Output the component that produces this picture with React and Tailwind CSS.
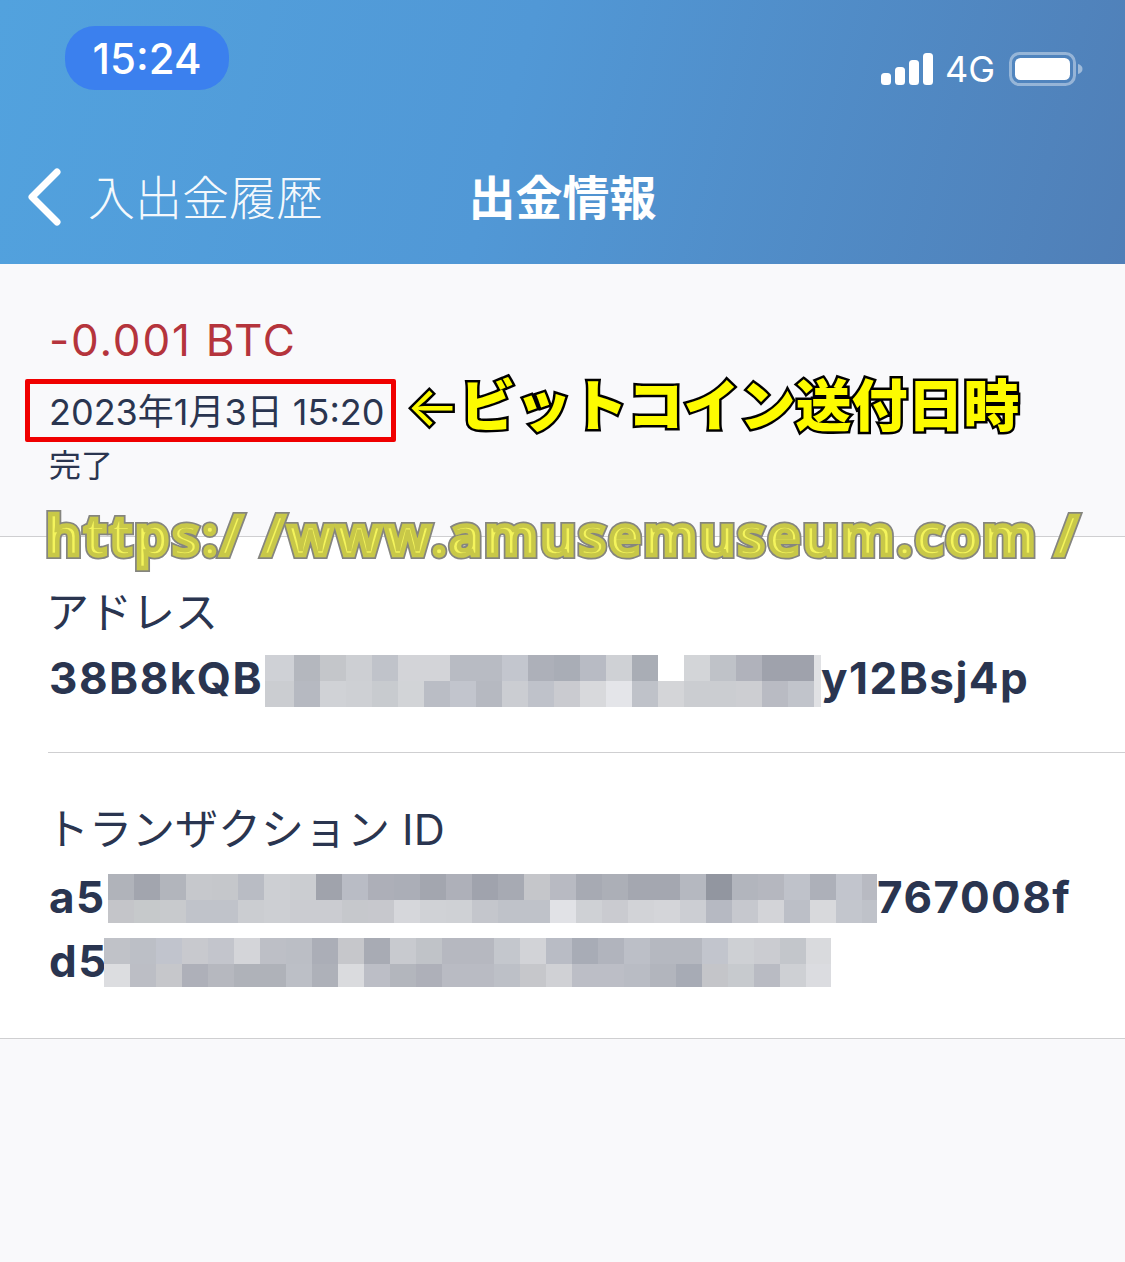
const CJK = '"Inter", "Noto Sans CJK JP", sans-serif';

// mosaic colours, read off the picture cell by cell
const addressCells = {
  top: ['#cfd1d6', '#b4b7be', '#c4c6ca', '#cdcfd3', '#c0c3ca', '#d3d4d8', '#d3d4d8', '#b8bbc3', '#b8bbc3', '#c3c6ce', '#adb0b9', '#a9adb6', '#b8bbc4', '#cfd1d5', '#a9adb5', '#ffffff', '#d3d5d8', '#bfc2c8', '#b0b2bb', '#9fa2ac', '#9fa2ac', '#e0e1e4'],
  bottom: ['#cbcdd1', '#b6b9c1', '#d0d2d6', '#ced0d4', '#c8cbcf', '#d2d4d7', '#babdc5', '#c2c5cd', '#b6b9c1', '#cbcdd2', '#bfc2ca', '#cacbd0', '#d8d9dc', '#e4e5e9', '#bfc2c9', '#d4d5d8', '#cbcdd1', '#cbcdd1', '#cdced2', '#b9bbc3', '#c1c4cb', '#e0e1e4'],
};
const txCells = {
  top: ['#b0b3ba', '#a2a5ae', '#b2b5bc', '#c6c8cc', '#c5c7cb', '#b9bcc4', '#cdcfd3', '#cbcdd1', '#a0a3ac', '#b9bcc5', '#adafb8', '#abaeb7', '#a3a6af', '#aeb0b9', '#a0a3ad', '#a7aab3', '#c5c6ca', '#b8bac2', '#a7aab3', '#acafb7', '#a4a7b0', '#a4a7b0', '#b5b8c0', '#9296a0', '#b2b5bd', '#b5b7bf', '#bfc2ca', '#adb0b9', '#c2c5cd', '#b8bac2'],
  bottom: ['#c4c5c9', '#c6c9cb', '#c8cacd', '#c0c3ca', '#c0c3ca', '#cbcdd1', '#cdcfd3', '#cbccd1', '#cbccd1', '#c6c8cc', '#c7c8cd', '#d6d7db', '#d0d2d6', '#cfd1d5', '#c4c6cc', '#bfc2c9', '#bfc2c9', '#e1e2e6', '#cfd1d5', '#cacbd0', '#d2d3d7', '#d4d5d9', '#ccced3', '#b6b9c2', '#c6c8ce', '#d3d4d8', '#bcbfc7', '#d8d9dc', '#c3c6cd', '#bfc2c9'],
};
const tx2Cells = {
  top: ['#c0c2c8', '#bcbfc6', '#c1c4cd', '#c8c9ce', '#c3c5cc', '#d4d5d9', '#bdbfc6', '#bbbec5', '#abaeb7', '#c6c7cb', '#a8abb4', '#c8cacf', '#c0c3c8', '#b6b8c0', '#b6b8c0', '#c4c7cd', '#d2d3d7', '#b9bcc5', '#a8acb6', '#b1b4bd', '#bcbfc7', '#b5b8c0', '#b5b8c0', '#c2c5cd', '#ced0d4', '#cbccd1', '#c3c6cb', '#d9dadd'],
  bottom: ['#dcdde0', '#bcbec5', '#c6c7cb', '#aeb0b9', '#b6b8bf', '#afb2b9', '#afb2b9', '#bcbfc6', '#aeb1b9', '#dadbde', '#bcbec6', '#b3b6bd', '#aeb0b9', '#b9bbc3', '#b9bbc3', '#bdc0c7', '#c6c7cb', '#d0d1d5', '#bcbec6', '#bcbec6', '#b9bcc4', '#b2b5bd', '#a7abb5', '#c4c5c9', '#c7cace', '#b9bbc3', '#ced0d4', '#dbdce0'],
};

// cells are 26px wide, only the first and last one got cut when the area was blurred
function Mosaic({ cells, first = 26, last = 26, bottomHeight = 'h-[26px]' }) {
  const row = (colors, cls) => (
    <div className={`flex ${cls}`}>
      {colors.map((c, i) => (
        <div
          key={i}
          className="h-full shrink-0"
          style={{ backgroundColor: c, width: i === 0 ? first : i === colors.length - 1 ? last : 26 }}
        />
      ))}
    </div>
  );
  return (
    <div className="flex shrink-0 flex-col">
      {row(cells.top, 'h-[26px]')}
      {row(cells.bottom, bottomHeight)}
    </div>
  );
}

function Signal() {
  return (
    <svg width="52" height="34" viewBox="0 0 52 34" fill="#fff">
      <rect x="0" y="21" width="10" height="12" rx="3.5" />
      <rect x="14" y="15" width="10" height="18" rx="3.5" />
      <rect x="28" y="8" width="10" height="25" rx="3.5" />
      <rect x="42" y="1" width="10" height="32" rx="3.5" />
    </svg>
  );
}

function Battery() {
  return (
    <svg width="74" height="34" viewBox="0 0 74 34" fill="none">
      <rect x="1.5" y="1.5" width="64" height="31" rx="9" stroke="#fff" strokeOpacity="0.4" strokeWidth="3" />
      <rect x="6" y="6" width="55" height="22" rx="5.5" fill="#fff" />
      <path d="M69 12c3 .8 4.5 2.6 4.5 5s-1.500 4.200-4.500 5z" fill="#fff" fillOpacity="0.45" />
    </svg>
  );
}

export default function App() {
  return (
    <div className="min-h-[1262px] w-full overflow-hidden bg-[#f9f9fb] text-[#2a3550]" style={{ fontFamily: CJK }}>
      <header className="h-[264px] bg-[linear-gradient(105deg,#52a2de_0%,#5198d6_45%,#507fb7_100%)] text-white">
        <div className="flex items-start justify-between pl-[65px] pr-[42px] pt-[26px]">
          <div className="flex h-[64px] w-[164px] items-center justify-center rounded-[30px] bg-[#3b80ee] text-[42px] font-medium">
            15:24
          </div>
          <div className="mt-[26px] flex items-center">
            <Signal />
            <span className="ml-[12px] text-[36px] leading-[34px]">4G</span>
            <span className="ml-[14px]"><Battery /></span>
          </div>
        </div>
        <div className="mt-[78px] grid grid-cols-3 items-center">
          <div className="flex items-center pl-[28px]">
            <svg width="34" height="58" viewBox="0 0 34 58" fill="none" stroke="#fff" strokeWidth="7" strokeLinecap="round" strokeLinejoin="round">
              <path d="M29 4 4 29l25 25" />
            </svg>
            <span className="ml-[26px] whitespace-nowrap text-[47px] font-light leading-none text-white/95">入出金履歴</span>
          </div>
          <div className="text-center text-[47px] font-bold leading-none">出金情報</div>
        </div>
      </header>

      <section className="relative h-[273px] border-b border-[#cfcfd1] pl-[49px] pt-[49px]">
        <div className="text-[44px] leading-[54px] tracking-[1.8px] text-[#b5343c]">-0.001 BTC</div>
        <div className="mt-[23px] whitespace-nowrap text-[36px] leading-[44px]">2023年1月3日 15:20</div>
        <div className="mt-[12px] text-[32px] leading-[40px]">完了</div>

        <div className="absolute left-[25px] top-[115px] h-[63px] w-[371px] rounded-[2px] border-[5px] border-[#f00000]" />
        <div className="absolute left-[406px] top-[104px] whitespace-nowrap text-[56px] font-black leading-[76px] text-[#fdfb00] [-webkit-text-stroke:5px_#000] [paint-order:stroke_fill]">
          <span className="font-normal">←</span>ビットコイン送付日時
        </div>
        {/* outline layer underneath, olive and yellow copy on top through ::after */}
        <div
          data-text="https:/ /www.amusemuseum.com /"
          className="absolute left-[46px] top-[230px] z-10 whitespace-pre text-[55px] font-semibold leading-[80px] tracking-[3px] text-[#85857f] [-webkit-text-stroke:8px_#85857f] [paint-order:stroke_fill] after:absolute after:left-0 after:top-0 after:text-[#f4f45c] after:content-[attr(data-text)] after:[-webkit-text-stroke:4.500px_#c8c848] after:[paint-order:normal]"
          style={{ fontFamily: '"Noto Sans", sans-serif' }}
        >
          https:/ /www.amusemuseum.com /
        </div>
      </section>

      <section className="bg-white pl-[48px]">
        <div className="h-[216px] border-b border-[#cfcfd1] pl-[1px] pt-[50px]">
          <div className="-ml-[3px] text-[43px] leading-[50px]">アドレス</div>
          <div className="mt-[18px] flex h-[52px] items-center text-[44px] font-bold leading-[46px] tracking-[1.5px]">
            <span className="w-[216px] shrink-0 pb-[6px]">38B8kQB</span>
            <Mosaic cells={addressCells} first={29} last={7} />
            <span className="pb-[6px]">y12Bsj4p</span>
          </div>
        </div>
        <div className="h-[285px] pl-[1px] pt-[51px]">
          <div className="-ml-[3px] whitespace-nowrap text-[43px] leading-[50px]">トランザクション ID</div>
          <div className="mt-[20px] flex h-[49px] items-center text-[44px] font-bold leading-[46px] tracking-[1.5px]">
            <span className="w-[59px] shrink-0 pb-[4px]">a5</span>
            <Mosaic cells={txCells} last={15} bottomHeight="h-[23px]" />
            <span className="pb-[4px]">767008f</span>
          </div>
          <div className="mt-[15px] flex h-[49px] items-center text-[44px] font-bold leading-[46px] tracking-[1.5px]">
            <span className="w-[55px] shrink-0 pb-[4px]">d5</span>
            <Mosaic cells={tx2Cells} last={25} bottomHeight="h-[23px]" />
          </div>
        </div>
      </section>
      <div className="border-t border-[#cfcfd1]" />
    </div>
  );
}
